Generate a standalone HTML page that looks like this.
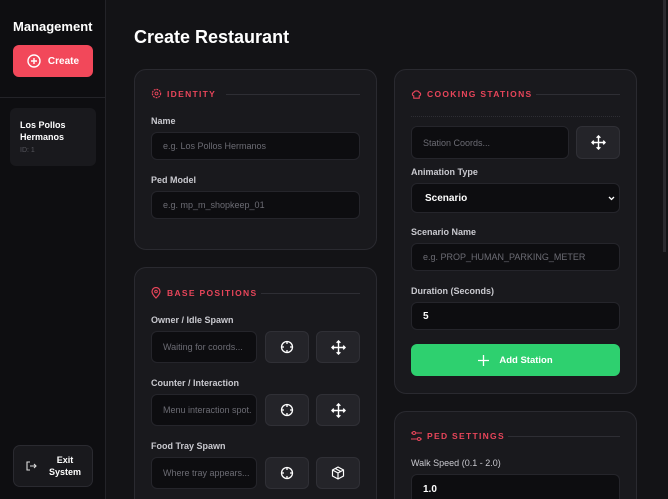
<!DOCTYPE html>
<html style="width:668px;height:499px;overflow:hidden"><head><style>
*{box-sizing:border-box;margin:0;padding:0}
body{width:668px;height:499px;overflow:hidden;background:#131316;font-family:"Liberation Sans",sans-serif;color:#fff;position:relative}
.a{position:absolute}
.side{left:0;top:0;width:106px;height:499px;background:#0e0e11;border-right:1px solid #232328}
.card{background:#19191d;border:1px solid #2a2a30;border-radius:12px}
.cb{border-bottom:none;border-radius:12px 12px 0 0}
.lbl{font-size:9px;color:#c9c9cf;font-weight:bold}
.inp{background:#0d0d10;border:1px solid #25252b;border-radius:6px;font-size:9px;color:#6c6c74;padding-left:11px;display:flex;align-items:center;overflow:hidden;white-space:nowrap}
.btn{background:#242429;border:1px solid #303036;border-radius:6px;display:flex;align-items:center;justify-content:center}
.hd{font-size:8.5px;font-weight:bold;letter-spacing:1.3px;color:#e8455a}
.ln{height:1px;background:#2e2e34}
</style></head><body>
<div class="a side"></div>
<div class="a" style="left:13px;top:19px;font-size:13px;font-weight:bold">Management</div>
<div class="a" style="left:13px;top:45px;width:80px;height:32px;background:#f2485a;border-radius:6px;display:flex;align-items:center;justify-content:center;font-size:10px;font-weight:bold">
<svg width="14" height="14" viewBox="0 0 14 14" style="margin-right:7px"><circle cx="7" cy="7" r="6" fill="none" stroke="#fff" stroke-width="1.4"/><path d="M7 4v6M4 7h6" stroke="#fff" stroke-width="1.4"/></svg>Create</div>
<div class="a" style="left:0;top:97px;width:106px;height:1px;background:#232328"></div>
<div class="a" style="left:10px;top:108px;width:86px;height:58px;background:#19191d;border-radius:6px"></div>
<div class="a" style="left:20px;top:119px;font-size:9px;font-weight:bold;line-height:12px">Los Pollos<br>Hermanos</div>
<div class="a" style="left:20px;top:147px;font-size:7px;color:#55555c">ID: 1</div>
<div class="a btn" style="left:13px;top:445px;width:80px;height:42px;background:#19191d;border-color:#2a2a30;border-radius:7px">
<svg width="12" height="12" viewBox="0 0 12 12" style="margin-right:12px"><path d="M5 2H2v8h3M5 6h6M9 4l2 2-2 2" fill="none" stroke="#ddd" stroke-width="1.1"/></svg>
<div style="font-size:9px;font-weight:bold;text-align:center;line-height:12px">Exit<br>System</div></div>
<div class="a" style="left:663px;top:0;width:3px;height:252px;background:#2a2a2f"></div>

<div class="a" style="left:134px;top:27px;font-size:18px;font-weight:bold">Create Restaurant</div>

<div class="a card" style="left:134px;top:69px;width:243px;height:181px"></div>
<svg class="a" style="left:151px;top:88px" width="11" height="11" viewBox="0 0 12 12"><circle cx="6" cy="6" r="4.5" fill="none" stroke="#e8455a" stroke-width="1.3" stroke-dasharray="2 1"/><circle cx="6" cy="6" r="1.6" fill="none" stroke="#e8455a"/></svg>
<div class="a hd" style="left:167px;top:89px">IDENTITY</div>
<div class="a ln" style="left:226px;top:94px;width:134px"></div>
<div class="a lbl" style="left:151px;top:116px">Name</div>
<div class="a inp" style="left:151px;top:132px;width:209px;height:28px">e.g. Los Pollos Hermanos</div>
<div class="a lbl" style="left:151px;top:175px">Ped Model</div>
<div class="a inp" style="left:151px;top:191px;width:209px;height:28px">e.g. mp_m_shopkeep_01</div>

<div class="a card cb" style="left:134px;top:267px;width:243px;height:232px"></div>
<svg class="a" style="left:151px;top:287px" width="10" height="12" viewBox="0 0 10 12"><path d="M5 11C2 8 1 6 1 4.5a4 4 0 018 0C9 6 8 8 5 11z" fill="none" stroke="#e8455a" stroke-width="1.2"/><circle cx="5" cy="4.5" r="1.3" fill="none" stroke="#e8455a"/></svg>
<div class="a hd" style="left:167px;top:288px">BASE POSITIONS</div>
<div class="a ln" style="left:261px;top:293px;width:99px"></div>

<div class="a lbl" style="left:151px;top:315px">Owner / Idle Spawn</div>
<div class="a inp" style="left:151px;top:331px;width:106px;height:32px">Waiting for coords...</div>
<div class="a lbl" style="left:151px;top:378px">Counter / Interaction</div>
<div class="a inp" style="left:151px;top:394px;width:106px;height:32px">Menu interaction spot.</div>
<div class="a lbl" style="left:151px;top:441px">Food Tray Spawn</div>
<div class="a inp" style="left:151px;top:457px;width:106px;height:32px">Where tray appears...</div>

<div class="a btn" style="left:265px;top:331px;width:44px;height:32px"><svg width="14" height="14" viewBox="0 0 14 14"><circle cx="7" cy="7" r="5.5" fill="none" stroke="#fff" stroke-width="1.3"/><path d="M7 1v3M7 10v3M1 7h3M10 7h3" stroke="#fff" stroke-width="1.3"/></svg></div>
<div class="a btn" style="left:316px;top:331px;width:44px;height:32px"><svg width="15" height="15" viewBox="0 0 16 16"><path d="M8 1v14M1 8h14M6 3l2-2 2 2M6 13l2 2 2-2M3 6L1 8l2 2M13 6l2 2-2 2" fill="none" stroke="#fff" stroke-width="1.5"/></svg></div>
<div class="a btn" style="left:265px;top:394px;width:44px;height:32px"><svg width="14" height="14" viewBox="0 0 14 14"><circle cx="7" cy="7" r="5.5" fill="none" stroke="#fff" stroke-width="1.3"/><path d="M7 1v3M7 10v3M1 7h3M10 7h3" stroke="#fff" stroke-width="1.3"/></svg></div>
<div class="a btn" style="left:316px;top:394px;width:44px;height:32px"><svg width="15" height="15" viewBox="0 0 16 16"><path d="M8 1v14M1 8h14M6 3l2-2 2 2M6 13l2 2 2-2M3 6L1 8l2 2M13 6l2 2-2 2" fill="none" stroke="#fff" stroke-width="1.5"/></svg></div>
<div class="a btn" style="left:265px;top:457px;width:44px;height:32px"><svg width="14" height="14" viewBox="0 0 14 14"><circle cx="7" cy="7" r="5.5" fill="none" stroke="#fff" stroke-width="1.3"/><path d="M7 1v3M7 10v3M1 7h3M10 7h3" stroke="#fff" stroke-width="1.3"/></svg></div>
<div class="a btn" style="left:316px;top:457px;width:44px;height:32px"><svg width="14" height="14" viewBox="0 0 14 14"><path d="M7 1l5.5 3v6L7 13 1.5 10V4zM1.5 4L7 7l5.5-3M7 7v6M4.2 2.5l5.5 3" fill="none" stroke="#fff" stroke-width="1.2"/></svg></div>

<div class="a card" style="left:394px;top:69px;width:243px;height:325px"></div>
<svg class="a" style="left:411px;top:89px" width="11" height="11" viewBox="0 0 12 12"><path d="M3 7.5C1 7 1 4 3 4c.5-2.5 5.5-2.5 6 0 2 0 2 3 0 3.5V10H3z" fill="none" stroke="#e8455a" stroke-width="1.2"/></svg>
<div class="a hd" style="left:427px;top:89px">COOKING STATIONS</div>
<div class="a ln" style="left:536px;top:94px;width:84px"></div>
<div class="a" style="left:411px;top:116px;width:209px;border-top:1px dotted #2e2e34"></div>
<div class="a inp" style="left:411px;top:126px;width:158px;height:33px">Station Coords...</div>
<div class="a btn" style="left:576px;top:126px;width:44px;height:33px"><svg width="15" height="15" viewBox="0 0 16 16"><path d="M8 1v14M1 8h14M6 3l2-2 2 2M6 13l2 2 2-2M3 6L1 8l2 2M13 6l2 2-2 2" fill="none" stroke="#fff" stroke-width="1.5"/></svg></div>
<div class="a lbl" style="left:411px;top:167px">Animation Type</div>
<div class="a inp" style="left:411px;top:183px;width:209px;height:30px;color:#fff;font-weight:bold;font-size:10px;padding-left:13px">Scenario<svg style="position:absolute;right:4px;top:12px" width="7" height="5" viewBox="0 0 7 5"><path d="M1 1l2.5 2.5L6 1" fill="none" stroke="#fff" stroke-width="1.3"/></svg></div>
<div class="a lbl" style="left:411px;top:227px">Scenario Name</div>
<div class="a inp" style="left:411px;top:243px;width:209px;height:28px">e.g. PROP_HUMAN_PARKING_METER</div>
<div class="a lbl" style="left:411px;top:286px">Duration (Seconds)</div>
<div class="a inp" style="left:411px;top:302px;width:209px;height:28px;color:#fff;font-weight:bold;font-size:10px">5</div>
<div class="a" style="left:411px;top:344px;width:209px;height:32px;background:#2ed06f;border-radius:6px;display:flex;align-items:center;justify-content:center;font-size:9.5px;font-weight:bold">
<svg width="11" height="11" viewBox="0 0 11 11" style="margin-right:10px"><path d="M5.5 0v11M0 5.5h11" stroke="#fff" stroke-width="1.3"/></svg>Add Station</div>

<div class="a card cb" style="left:394px;top:411px;width:243px;height:88px"></div>
<svg class="a" style="left:411px;top:431px" width="11" height="10" viewBox="0 0 11 10"><path d="M0 2h11M0 8h11" stroke="#e8455a" stroke-width="1.1"/><circle cx="3" cy="2" r="1.5" fill="#19191d" stroke="#e8455a"/><circle cx="8" cy="8" r="1.5" fill="#19191d" stroke="#e8455a"/></svg>
<div class="a hd" style="left:427px;top:431px">PED SETTINGS</div>
<div class="a ln" style="left:508px;top:436px;width:112px"></div>
<div class="a lbl" style="left:411px;top:458px;font-weight:normal">Walk Speed (0.1 - 2.0)</div>
<div class="a inp" style="left:411px;top:474px;width:209px;height:25px;color:#fff;font-weight:bold;font-size:10px;border-bottom:none;border-radius:6px 6px 0 0;padding-top:4px">1.0</div>
</body></html>
